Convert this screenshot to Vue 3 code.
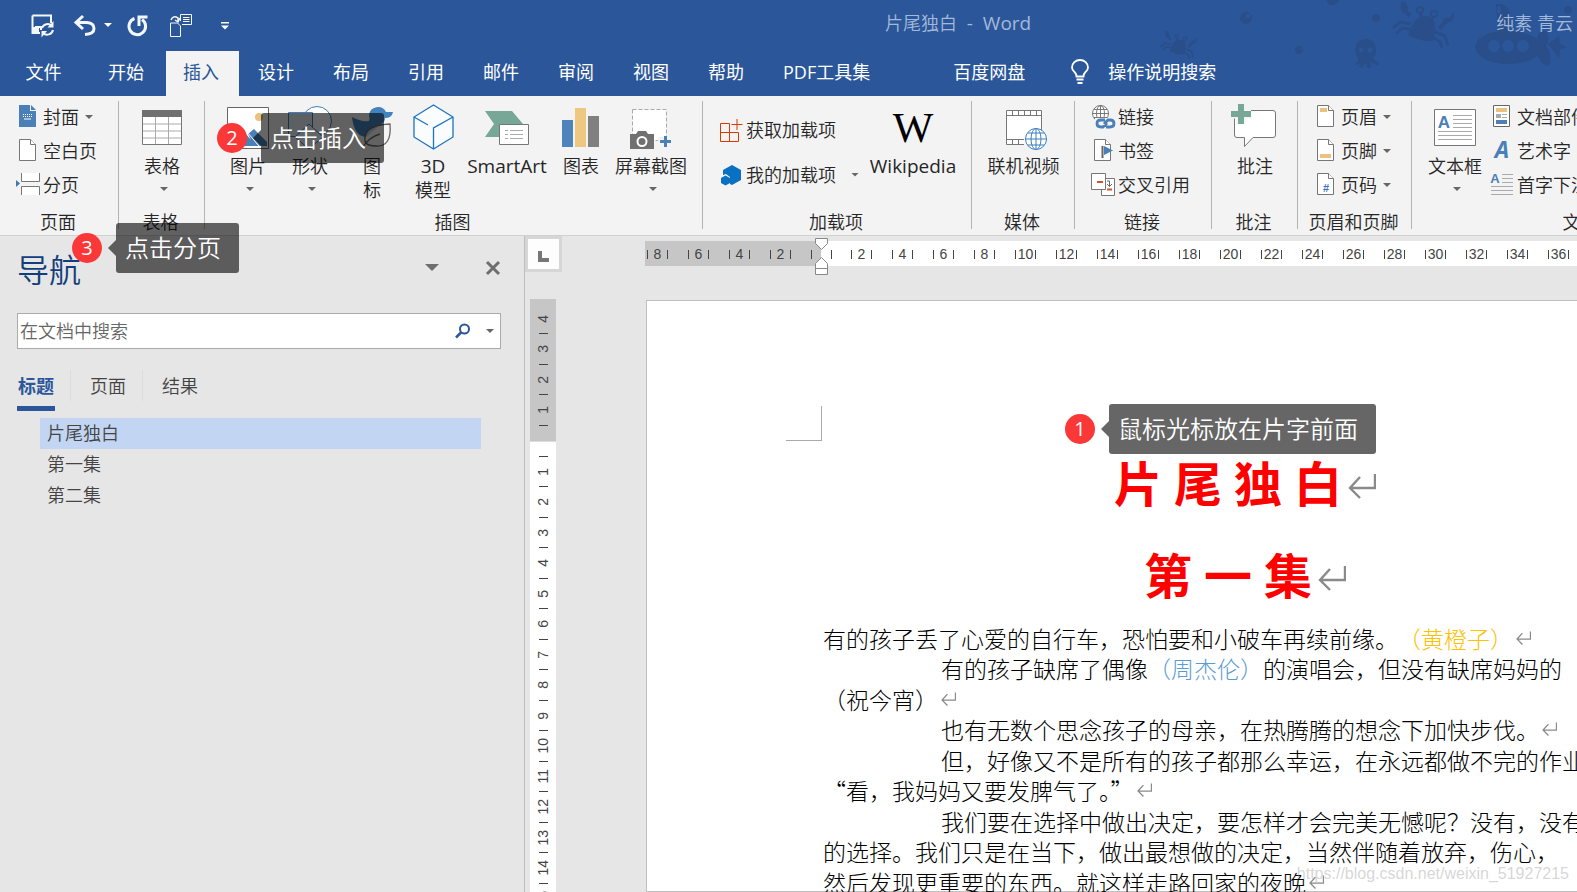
<script setup>
const tabs = ['开始', '插入', '设计', '布局', '引用', '邮件', '审阅', '视图', '帮助', 'PDF工具集', '百度网盘']
const activeTab = '插入'

const rulerLeft = [8, 6, 4, 2]
const rulerRight = Array.from({ length: 19 }, (_, i) => (i + 1) * 2)
const rulerTop = [4, 3, 2, 1]
const rulerDown = Array.from({ length: 15 }, (_, i) => i + 1)

const headings = ['片尾独白', '第一集', '第二集']

const lines = [
  { parts: [{ t: '有的孩子丢了心爱的自行车，恐怕要和小破车再续前缘。' }, { t: '（黄橙子）', c: 'gold' }], end: true },
  { deep: true, parts: [{ t: '有的孩子缺席了偶像' }, { t: '（周杰伦）', c: 'sky' }, { t: '的演唱会，但没有缺席妈妈的' }] },
  { parts: [{ t: '（祝今宵）' }], end: true },
  { deep: true, parts: [{ t: '也有无数个思念孩子的母亲，在热腾腾的想念下加快步伐。' }], end: true },
  { deep: true, parts: [{ t: '但，好像又不是所有的孩子都那么幸运，在永远都做不完的作业' }] },
  { parts: [{ t: '“看，我妈妈又要发脾气了。”' }], end: true },
  { deep: true, parts: [{ t: '我们要在选择中做出决定，要怎样才会完美无憾呢？没有，没有' }] },
  { parts: [{ t: '的选择。我们只是在当下，做出最想做的决定，当然伴随着放弃，伤心，' }] },
  { parts: [{ t: '然后发现更重要的东西。就这样走路回家的夜晚' }], end: true }
]
</script>

<template>
  <div class="app">
    <svg class="defs" width="0" height="0" aria-hidden="true">
      <symbol id="mark" viewBox="0 0 28 26">
        <path d="M27 1V15H2M12 4L2 15L12 25" fill="none" stroke="#8a8a8a" stroke-width="2.4" />
      </symbol>
      <symbol id="sheet" viewBox="0 0 24 24">
        <path d="M3.500 .5H14.500L19.500 5.500V21.500H3.500Z" fill="#fff" stroke="#777" />
        <path d="M14.500 .5V5.500H19.500" fill="#fff" stroke="#777" />
      </symbol>
      <symbol id="crab" viewBox="0 0 64 50">
        <g fill="#2a4e89">
          <path d="M16 35Q22 16 34 16Q48 18 41 41Q28 42 16 35Z" />
          <path d="M10 1Q16 2 16 11L20 14L17 17L10 12Q7 6 10 1Z" />
          <path d="M62 11Q63 22 54 24L49 30L46 27L51 22Q51 16 58 18Z" />
          <circle cx="28" cy="10" r="4" /><circle cx="42" cy="14" r="4" />
        </g>
        <g fill="none" stroke="#2a4e89" stroke-width="3">
          <path d="M19 24L8 22L1 28M18 29L10 28L4 34M43 32L53 36L56 46M41 37L48 42L50 48M28 12L30 20M41 16L38 22" />
        </g>
        <g fill="#2b579a"><circle cx="28" cy="10" r="2" /><circle cx="42" cy="14" r="2" /></g>
      </symbol>
    </svg>

    <header class="top">
      <svg class="deco" width="417" height="70" viewBox="0 0 417 70" aria-hidden="true">
        <use href="#crab" x="232" y="0" width="64" height="50" />
        <use href="#crab" x="0" y="30" width="38" height="30" />
        <g fill="#2a4e89">
          <circle cx="86" cy="18" r="6" /><circle cx="139" cy="50" r="4" /><circle cx="216" cy="18" r="4" />
          <path d="M166 0A7 8 0 0 0 179 0Z" /><circle cx="408" cy="10" r="4" />
          <path d="M195 50Q196 39 206 39Q216 39 216 50Q216 56 213 58Q217 63 219 61L218 65Q213 65 211 61V68H207L206 62L202 68L199 67L201 61Q198 67 195 64Q200 60 197 57Z" />
          <path d="M315 47Q318 31 348 31Q366 31 377 39Q378 30 386 31Q391 38 386 46Q393 55 389 66Q381 65 378 56Q366 64 348 64Q318 63 315 47Z" />
          <path d="M388 44L399 36L400 44L407 47L400 50L399 58Z" />
          <path d="M336 4Q347 3 350 13V31H338Z" />
        </g>
        <g fill="#2b579a">
          <circle cx="334" cy="46" r="6" /><circle cx="348" cy="46" r="6" /><circle cx="363" cy="46" r="6" />
          <circle cx="88" cy="16" r="2" /><circle cx="141" cy="49" r="1" /><circle cx="201" cy="50" r="2.500" /><circle cx="210" cy="50" r="2.500" />
          <ellipse cx="339" cy="10" rx="2" ry="4" />
        </g>
      </svg>

      <div class="titlebar">
        <button class="q" aria-label="保存">
          <svg width="24" height="24" viewBox="0 0 24 24" fill="none" stroke="#f4f7fb">
            <path d="M1.500 1.500H20V9M1.500 1.500V19H9" stroke-width="2" /><path d="M5 19V13H10V16" stroke-width="2" />
            <path d="M2 13H8V19H2Z" fill="#f4f7fb" stroke="none" />
            <path d="M11 14A6 6 0 0 1 21 12M22 16A6 6 0 0 1 12 19" stroke-width="2" />
            <path d="M22.500 7V13.500H16.500ZM10.500 23.500V17H16Z" fill="#f4f7fb" stroke="none" />
          </svg>
        </button>
        <button class="q undo" aria-label="撤消">
          <svg width="24" height="24" viewBox="0 0 24 24" fill="none" stroke="#f4f7fb" stroke-width="3">
            <path d="M10 2L3 8.500L10 15M3 8.500H14Q21 9 21 14.500Q21 20 12 20.500" />
          </svg>
        </button>
        <button class="q mini" aria-label="撤消列表"><svg width="8" height="5" viewBox="0 0 8 5"><path d="M0 0H8L4 4Z" fill="#fff" /></svg></button>
        <button class="q redo" aria-label="重复">
          <svg width="22" height="22" viewBox="0 0 22 22" fill="none" stroke="#f4f7fb" stroke-width="3">
            <path d="M7.500 3.500A8.300 8.300 0 1 0 15 4.500" /><path d="M12 11V2H20.500" />
          </svg>
        </button>
        <button class="q sheets" aria-label="插入页">
          <svg width="24" height="24" viewBox="0 0 24 24" fill="none" stroke="#f4f7fb">
            <path d="M1.500 9V22.500H11.500V12L8.500 9Z" /><path d="M11.500 7V.5H22.500V10.500H13" />
            <path d="M14 3.500H20.500M14 5.500H20.500M14 7.500H20.500" /><path d="M2 6Q4 1 9 4V7M6 6L9 8L11 4" stroke-width="1.500" />
          </svg>
        </button>
        <button class="q more" aria-label="自定义快速访问工具栏"><svg width="8" height="8" viewBox="0 0 8 8" fill="#fff"><path d="M0 0H8V1.500H0ZM0 3.500H8L4 7.500Z" /></svg></button>
        <h1 class="title">片尾独白<span class="latin">&nbsp; - &nbsp;Word</span></h1>
        <span class="user">纯素 青云</span>
      </div>

      <nav class="tabs">
        <button class="file">文件</button>
        <button v-for="t in tabs" :key="t" :class="{ on: t === activeTab, far: t === '百度网盘' }">{{ t }}</button>
        <button class="tell">
          <svg width="18" height="26" viewBox="0 0 18 26" fill="none" stroke="#fff" stroke-width="1.800">
            <path d="M5.500 17.500Q5.500 15 3.500 13Q1 11 1 8.500A8 7.500 0 0 1 17 8.500Q17 11 14.500 13Q12.500 15 12.500 17.500ZM5.500 20.500H12.500M6.500 24H11.500" />
          </svg>
          操作说明搜索
        </button>
      </nav>
    </header>

    <section class="ribbon" aria-label="插入">
      <div class="group g1">
        <div class="body">
          <div class="col">
            <button class="small">
              <svg width="24" height="24" viewBox="0 0 24 24"><path d="M3 0H14V6H20V22H3Z" fill="#4a7fb8" /><path d="M15 0L20 5H15Z" fill="#4a7fb8" /><path d="M7 9.500H16M7 11.500H16" stroke="#fff" stroke-dasharray="1 1" /><path d="M8 14H15" stroke="#fff" /></svg>
              封面<i class="arr"></i>
            </button>
            <button class="small"><svg width="24" height="24"><use href="#sheet" /></svg>空白页</button>
            <button class="small">
              <svg width="24" height="24" viewBox="0 0 24 24"><path d="M5.500 0V8.500H23.500V0M5.500 22V13.500H23.500V22" fill="#fff" stroke="#777" /><path d="M0 7L4 10.500L0 14Z" fill="#3f78b4" /></svg>
              分页
            </button>
          </div>
        </div>
        <h2>页面</h2>
      </div>

      <div class="group g2">
        <div class="body">
          <button class="large">
            <svg width="46" height="46" viewBox="0 0 46 46"><path d="M3.500 6.500H42.500V40.500H3.500Z" fill="#fff" stroke="#777" /><path d="M3 6H43V13H3Z" fill="#707070" /><path d="M4 20H42M4 27H42M4 34H42M16.500 13V40M29.500 13V40" stroke="#aaa" /></svg>
            <span>表格</span><i class="arr"></i>
          </button>
        </div>
        <h2>表格</h2>
      </div>

      <div class="group g3">
        <div class="body">
          <button class="large w62">
            <svg width="46" height="46" viewBox="0 0 46 46"><path d="M2.500 3.500H43.500V44.500H2.500Z" fill="#fff" stroke="#666" /><circle cx="34" cy="13" r="4" fill="#eac27d" /><path d="M4 42V37L15 23L26 36L23 30L29 25L42 38V42Z" fill="#4a7fb8" /><path d="M22 28L34 42" stroke="#fff" /></svg>
            <span>图片</span><i class="arr"></i>
          </button>
          <button class="large w62">
            <svg width="46" height="46" viewBox="0 0 46 46" stroke="#3f7fbf"><circle cx="30" cy="17" r="14.500" fill="#fff" /><path d="M1.500 8.500H25.500V32.500H1.500Z" fill="#e8eff8" /><path d="M22 20L36 33L22 45L8 33Z" fill="#f8fafc" /></svg>
            <span>形状</span><i class="arr"></i>
          </button>
          <button class="large w62 narrow">
            <svg width="46" height="46" viewBox="0 0 46 46"><path d="M20 11A9 9 0 0 1 37 8L44 8Q43 14 36 14Q36 18 32 20L17 33Q5 32 3 13Q12 18 20 17Q21 15 20 11Z" fill="#4282bd" /><path d="M41 20Q43 43 27 42Q12 42 17 30Q20 21 41 20ZM13 44Q20 33 31 30" fill="#f3f3f3" fill-opacity=".7" stroke="#666" stroke-width="1.300" /></svg>
            <span>图标</span>
          </button>
          <button class="large w60 narrow">
            <svg width="46" height="46" viewBox="0 0 46 46" fill="none" stroke="#1b74c5" stroke-width="1.300"><path d="M23.500 1L43 13V33L23.500 45L4 33V13Z" fill="#fafcfe" /><path d="M4 13L18 21M43 13L23.500 24V45" /></svg>
            <span><span class="latin">3D</span> 模型</span>
          </button>
          <button class="large w88">
            <svg width="46" height="46" viewBox="0 0 46 46"><path d="M1 7H28L39 20L28 33H1L10 20Z" fill="#76a797" /><path d="M15.500 20.500H44.500V40.500H15.500Z" fill="#fff" stroke="#777" /><path d="M21 26.500H24M21 30.500H24M21 34.500H24M26 26.500H39M26 30.500H39M26 34.500H39" stroke="#aaa" /></svg>
            <span class="latin">SmartArt</span>
          </button>
          <button class="large w60">
            <svg width="46" height="46" viewBox="0 0 46 46"><path d="M4 16H15V43H4Z" fill="#4e83bb" /><path d="M17 4H28V43H17Z" fill="#eec880" /><path d="M30 12H41V43H30Z" fill="#808080" /></svg>
            <span>图表</span>
          </button>
          <button class="large w80">
            <svg width="46" height="46" viewBox="0 0 46 46"><path d="M4.500 5.500H38.500V36.500H4.500Z" fill="#fff" stroke="#aaa" stroke-dasharray="4 2" /><path d="M30 33H46V45H30Z" fill="#f3f3f3" /><path d="M2 30H8L10 27H18L20 30H26V45H2Z" fill="#707070" /><circle cx="14" cy="37.500" r="4.500" fill="none" stroke="#fff" stroke-width="2" /><path d="M32 37.500H43M37.500 32V43" stroke="#4a7fb8" stroke-width="3" /></svg>
            <span>屏幕截图</span><i class="arr"></i>
          </button>
        </div>
        <h2>插图</h2>
      </div>

      <div class="group g4">
        <div class="body">
          <div class="col two">
            <button class="small">
              <svg width="24" height="24" viewBox="0 0 24 24" fill="none" stroke="#d83b01"><path d="M10.500 5.500H1.500V23.500H19.500V14.500H1.500M10.500 5.500V23.500M18 1V12M12.500 6.500H23.500" /></svg>
              获取加载项
            </button>
            <button class="small">
              <svg width="24" height="24" viewBox="0 0 24 24" fill="#0a70c4"><path d="M13 2L22 7V17L13 22L11 21V14L7 11L4 12V7Z" /><path d="M6.500 12.500L11 15V20L6.500 22.500L2 20V15Z" /></svg>
              我的加载项<i class="arr wide"></i>
            </button>
          </div>
          <button class="large w96">
            <svg width="46" height="46" viewBox="0 0 46 46"><text x="23" y="38" text-anchor="middle" font-family="Liberation Serif" font-size="43">W</text></svg>
            <span class="latin">Wikipedia</span>
          </button>
        </div>
        <h2>加载项</h2>
      </div>

      <div class="group g5">
        <div class="body">
          <button class="large">
            <svg width="46" height="46" viewBox="0 0 46 46"><path d="M5.500 6.500H40.500V40.500H5.500Z" fill="#fff" stroke="#777" /><path d="M5.500 11.500H40.500M5.500 35.500H24M11.500 6V11M17.500 6V11M23.500 6V11M29.500 6V11M35.500 6V11M11.500 36V40M17.500 36V40" stroke="#777" /><path d="M23 27H46V46H23Z" fill="#f3f3f3" /><path d="M23 27H40V30L24 41Z" fill="#fff" /><g fill="#fff" stroke="#3f7fbf"><circle cx="35" cy="35" r="10.500" /><ellipse cx="35" cy="35" rx="5" ry="10.500" /><path d="M35 24V46M24 35H46M27 29H43M27 41H43" /></g></svg>
            <span>联机视频</span>
          </button>
        </div>
        <h2>媒体</h2>
      </div>

      <div class="group g6">
        <div class="body">
          <div class="col">
            <button class="small">
              <svg width="24" height="24" viewBox="0 0 24 24" fill="none"><g stroke="#777"><circle cx="9.500" cy="8.500" r="8" fill="#fff" /><ellipse cx="9.500" cy="8.500" rx="4" ry="8" /><path d="M1 8.500H18M3 4.500H16M3 12.500H16M9.500 0V17" /></g><path d="M4 13H24V24H4Z" fill="#f3f3f3" /><path d="M14 15H10Q6 15 6 18.500Q6 22 10 22H12L16 18M15 22H19Q23 22 23 18.500Q23 15 19 15H17L13 19" stroke="#4a7fb8" stroke-width="2.800" /></svg>
              链接
            </button>
            <button class="small">
              <svg width="24" height="24"><use href="#sheet" /><path d="M11.500 7V19" stroke="#666" stroke-width="2" /><path d="M13 7L22 11.500L13 16Z" fill="#4a7fb8" /></svg>
              书签
            </button>
            <button class="small">
              <svg width="24" height="24" viewBox="0 0 24 24"><path d="M10.500 5.500H23.500V22.500H10.500Z" fill="#fff" stroke="#777" /><path d="M.5 .5H14.500V16.500H.5Z" fill="#fff" stroke="#777" /><path d="M6 9H12M16 16.500H21" stroke="#d9502e" stroke-width="2" /><path d="M16 8H18.500V13M16 11L18.500 13.500L21 11" fill="none" stroke="#666" /></svg>
              交叉引用
            </button>
          </div>
        </div>
        <h2>链接</h2>
      </div>

      <div class="group g7">
        <div class="body">
          <button class="large">
            <svg width="46" height="46" viewBox="0 0 46 46"><path d="M6 6.500H41Q43.500 6.500 43.500 9V31Q43.500 33.500 41 33.500H21L12.500 42.500V33.500H5Q2.500 33.500 2.500 31V10Z" fill="#fff" stroke="#777" /><path d="M-1 10H19M9 0V20" stroke="#f3f3f3" stroke-width="9" /><path d="M-1 10H19M9 0V20" stroke="#76a797" stroke-width="6" /></svg>
            <span>批注</span>
          </button>
        </div>
        <h2>批注</h2>
      </div>

      <div class="group g8">
        <div class="body">
          <div class="col">
            <button class="small"><svg width="24" height="24"><use href="#sheet" /><path d="M6 3H13V7H6Z" fill="#eac27d" /></svg>页眉<i class="arr"></i></button>
            <button class="small"><svg width="24" height="24"><use href="#sheet" /><path d="M6 15H17V19H6Z" fill="#eac27d" /></svg>页脚<i class="arr"></i></button>
            <button class="small"><svg width="24" height="24"><use href="#sheet" /><text x="12" y="19" text-anchor="middle" font-family="Liberation Sans" font-weight="bold" font-size="11" fill="#3f78b4">#</text></svg>页码<i class="arr"></i></button>
          </div>
        </div>
        <h2>页眉和页脚</h2>
      </div>

      <div class="group g9">
        <div class="body">
          <button class="large w70">
            <svg width="46" height="46" viewBox="0 0 46 46"><path d="M2.500 5.500H43.500V41.500H2.500Z" fill="#fff" stroke="#777" /><text x="12" y="24" text-anchor="middle" font-family="Liberation Sans" font-weight="bold" font-size="17" fill="#4a7fb8">A</text><path d="M21 11.500H40M21 15.500H40M21 19.500H40M21 23.500H40M6 27.500H40M6 31.500H40M6 35.500H40" stroke="#aaa" /></svg>
            <span>文本框</span><i class="arr"></i>
          </button>
          <div class="col flush">
            <button class="small"><svg width="24" height="24" viewBox="0 0 24 24"><path d="M3.500 .5H19.500V21.500H3.500Z" fill="#fff" stroke="#666" /><path d="M6 3H17V7H6Z" fill="#eac27d" /><path d="M6 9H11V13H6Z" fill="#aaa" /><path d="M12 9.500H17M12 12.500H17" stroke="#aaa" /><path d="M6 15H17V19H6Z" fill="#4a7fb8" /></svg>文档部件</button>
            <button class="small"><svg width="24" height="24" viewBox="0 0 24 24"><text x="12" y="19" text-anchor="middle" font-family="Open Sans" font-style="italic" font-weight="bold" font-size="23" fill="#4a7fb8">A</text></svg>艺术字</button>
            <button class="small"><svg width="24" height="24" viewBox="0 0 24 24"><text x="5" y="10" text-anchor="middle" font-family="Liberation Sans" font-weight="bold" font-size="13" fill="#4a7fb8">A</text><path d="M12 1.500H23M12 5.500H23M12 9.500H23M1 13.500H23M1 17.500H23M1 21.500H23" stroke="#aaa" /></svg>首字下沉</button>
          </div>
        </div>
        <h2>文本</h2>
      </div>
    </section>

    <main class="work">
      <aside class="pane">
        <div class="pane-head">
          <h2>导航</h2>
          <button class="opt" aria-label="任务窗格选项"><svg width="14" height="8" viewBox="0 0 14 8"><path d="M0 0H14L7 7Z" fill="#6e6e6e" /></svg></button>
          <button aria-label="关闭"><svg width="14" height="14" viewBox="0 0 14 14"><path d="M1 1L13 13M13 1L1 13" stroke="#6e6e6e" stroke-width="3" /></svg></button>
        </div>
        <div class="search">
          <input type="text" placeholder="在文档中搜索" aria-label="在文档中搜索" />
          <svg width="16" height="16" viewBox="0 0 16 16" fill="none" stroke="#2b579a" stroke-width="2"><circle cx="9.500" cy="6" r="4.500" /><path d="M6 9.500L1 14.500" stroke-width="2.500" /></svg>
          <i class="arr"></i>
        </div>
        <div class="pane-tabs">
          <button class="on">标题</button><button>页面</button><button>结果</button>
        </div>
        <ul class="outline">
          <li v-for="(h, i) in headings" :key="h"><a href="#" :class="{ on: i === 0 }">{{ h }}</a></li>
        </ul>
      </aside>

      <section class="editor">
        <button class="corner" aria-label="左对齐制表符"><svg width="11" height="11" viewBox="0 0 11 11"><path d="M0 0H4V7H11V11H0Z" fill="#777" /></svg></button>
        <div class="hruler">
          <div class="neg"><span v-for="n in rulerLeft" :key="n" class="cell"><b>{{ n }}</b></span><span class="half"></span></div>
          <div class="pos"><span class="half"></span><span v-for="n in rulerRight" :key="n" class="cell"><b>{{ n }}</b></span></div>
          <svg class="indent" width="13" height="37" viewBox="0 0 13 37" fill="#fff" stroke="#888"><path d="M.5 .5H12.500V5.500L6.500 11.500L.5 5.500ZM6.500 19.500L12.500 25.500V36.500H.5V25.500ZM.5 30.500H12.500" /></svg>
        </div>
        <div class="vruler">
          <div class="neg"><span v-for="n in rulerTop" :key="n"><b>{{ n }}</b></span></div>
          <div class="pos"><span></span><span v-for="n in rulerDown" :key="n"><b>{{ n }}</b></span></div>
        </div>
        <article class="page">
          <i class="crop"></i>
          <h2>片 尾 独 白<svg class="big" width="28" height="26"><use href="#mark" /></svg></h2>
          <h2>第 一 集<svg class="big" width="28" height="26"><use href="#mark" /></svg></h2>
          <div class="text">
            <p v-for="(l, i) in lines" :key="i" :class="{ deep: l.deep }">
              <span v-for="(p, j) in l.parts" :key="j" :class="p.c">{{ p.t }}</span><svg v-if="l.end" width="15" height="14"><use href="#mark" /></svg>
            </p>
          </div>
          <div class="callout c1"><b>1</b><span>鼠标光标放在片字前面</span></div>
        </article>
      </section>
    </main>

    <div class="callout c2"><b>2</b><span>点击插入</span></div>
    <div class="callout c3"><b>3</b><span>点击分页</span></div>
    <div class="watermark">https://blog.csdn.net/weixin_51927215</div>
  </div>
</template>

<style>
body { margin: 0; }
</style>

<style scoped>
* { box-sizing: border-box; }
.app {
  position: relative;
  display: flex;
  flex-direction: column;
  height: 100vh;
  overflow: hidden;
  font-family: "Open Sans", "Noto Sans CJK SC", sans-serif;
  font-size: 18px;
  line-height: 24px;
  font-weight: 350;
  color: #262626;
  background: #e6e6e6;
}
.defs { position: absolute; }
svg { display: block; flex: none; overflow: visible; }
button {
  border: 0;
  padding: 0;
  background: none;
  font: inherit;
  color: inherit;
  white-space: nowrap;
}
h1, h2, p, ul { margin: 0; padding: 0; font-size: inherit; font-weight: inherit; }
.latin { font-size: 19px; font-weight: 400; }
.arr {
  width: 8px;
  height: 4px;
  background: #666;
  clip-path: polygon(0 0, 100% 0, 50% 100%);
}

/* title bar and tabs */
.top { position: relative; flex: none; background: #2b579a; color: #fff; }
.deco { position: absolute; right: 0; top: 0; }
.titlebar { position: relative; display: flex; align-items: center; height: 51px; padding-left: 31px; }
.undo { margin-left: 18px; }
.mini { margin-left: 7px; }
.redo { margin-left: 15px; }
.sheets { margin-left: 20px; }
.more { margin-left: 28px; }
.title { margin-left: 656px; padding-bottom: 5px; color: #a3b9d9; white-space: nowrap; }
.user { margin-left: auto; padding: 0 4px 5px 0; color: #a3b9d9; white-space: nowrap; }
.tabs { position: relative; display: flex; gap: 2px; height: 45px; }
.tabs button { flex: none; padding: 0 20px 3px 17px; font-weight: 400; }
.tabs .file { width: 89px; padding: 0 2px 3px 0; }
.tabs .on { background: #f3f3f3; color: #2b579a; }
.tabs .far { margin-left: 44px; }
.tabs .tell { display: flex; align-items: center; gap: 19px; padding-left: 24px; }

/* ribbon */
.ribbon { display: flex; flex: none; height: 140px; padding-top: 4px; background: #f3f3f3; border-bottom: 1px solid #d0d0d0; overflow: hidden; }
.group { position: relative; flex: none; display: flex; flex-direction: column; }
.group::after { content: ""; position: absolute; right: 0; top: 1px; width: 1px; height: 128px; background: #b4b4b4; }
.group h2 { text-align: center; padding: 3px 3px 0 0; line-height: 26px; }
.body { display: flex; height: 106px; }
.g1 { width: 119px; }
.g2, .g7 { width: 86px; }
.g3 { width: 498px; }
.g3 .body { padding-left: 12px; }
.g4 { width: 269px; }
.g5 { width: 103px; }
.g6 { width: 137px; }
.g8 { width: 114px; }
.g9 { width: 340px; }
.g9 .body { padding-left: 8px; }
.g2 .large, .g5 .large, .g7 .large { width: 100%; }
.col { display: flex; flex-direction: column; padding-left: 16px; }
.col.flush { padding-left: 0; }
.col.two { padding-top: 7px; }
.small { display: flex; align-items: center; height: 34px; }
.two .small { height: 45px; }
.small svg { margin-right: 3px; }
.small .arr { margin-left: 6px; }
.small .arr.wide { margin-left: 15px; }
.large { display: flex; flex-direction: column; align-items: center; padding-top: 4px; white-space: normal; }
.large svg { margin-bottom: 4px; }
.large .arr { margin: 9px 0 0 4px; }
.narrow > span { width: 36px; }
.narrow.w62 > span { width: 18px; }
.w60 { width: 60px; }
.w62 { width: 62px; }
.w70 { width: 70px; }
.w80 { width: 80px; }
.w88 { width: 88px; }
.w96 { width: 96px; margin-left: 6px; }

/* navigation pane */
.work { display: flex; flex: 1; min-height: 0; }
.pane { flex: none; width: 525px; padding: 10px 23px 0 17px; border-right: 1px solid #bdbdbd; color: #444; }
.pane-head { display: flex; align-items: center; height: 48px; margin-bottom: 19px; padding-right: 1px; }
.pane-head h2 { flex: 1; font-size: 32px; line-height: 48px; color: #123f7c; }
.pane-head button { padding-bottom: 5px; }
.pane-head .opt { margin-right: 47px; }
.search { display: flex; align-items: center; height: 36px; padding: 0 6px 0 2px; background: #fff; border: 1px solid #ababab; }
.search input { flex: 1; min-width: 0; border: 0; outline: 0; padding: 0; font: inherit; background: none; }
.search input::placeholder { color: #666; opacity: 1; }
.search svg { margin-right: 3px; }
.search .arr { margin-left: 12px; }
.pane-tabs { display: flex; padding-top: 21px; }
.pane-tabs button { position: relative; height: 41px; width: 72px; padding: 0 0 10px 4px; }
.pane-tabs button + button::before { content: ""; position: absolute; left: 0; top: 0; width: 1px; height: 31px; background: #dcdcdc; }
.pane-tabs .on { width: 38px; margin-right: 15px; font-weight: 700; color: #2b579a; border-bottom: 5px solid #2b579a; padding: 0 0 5px; }
.outline { list-style: none; padding: 7px 20px 0 23px; }
.outline a { display: block; padding-left: 7px; line-height: 31px; color: #444; text-decoration: none; }
.outline .on { background: #c2d5f2; }

/* editor */
.editor { flex: 1; min-width: 0; display: grid; grid-template: 63px minmax(0, 1fr) / 37px minmax(0, 1fr); overflow: hidden; }
.corner { display: flex; width: 37px; height: 36px; padding: 12px 10px; border: 3px solid #d6d6d6; background: #fdfdfd; }
.hruler { position: relative; display: flex; height: 25px; margin: 5px 0 0 83px; font: 14px/27px "Liberation Sans", sans-serif; color: #444; }
.hruler b, .vruler b { font-weight: 400; }
.hruler .neg { display: flex; justify-content: flex-end; width: 176px; background: #c6c6c6; overflow: hidden; }
.hruler .pos { display: flex; flex: 1; min-width: 0; background: #fff; overflow: hidden; }
.cell { flex: none; display: flex; align-items: center; justify-content: center; width: 41px; padding-top: 2px; }
.cell b { display: flex; align-items: center; justify-content: center; width: 21px; height: 9px; border: solid #444; border-width: 0 1px; }
.half { flex: none; align-self: center; width: 10px; height: 9px; margin: 2px 10px 0 0; box-shadow: 1px 0 #444; }
.indent { position: absolute; left: 170px; top: -3px; }
.vruler { display: flex; flex-direction: column; width: 26px; margin-left: 5px; overflow: hidden; font: 14px/16px "Liberation Sans", sans-serif; color: #444; }
.vruler > div { display: grid; grid-auto-rows: 30px 31px; justify-items: center; }
.vruler .neg { flex: none; height: 143px; padding-top: 5px; background: #c6c6c6; border-bottom: 1px solid #dcdcdc; }
.vruler .pos { flex: 1; grid-template-rows: 15px; background: #fff; }
.vruler span { display: flex; align-items: center; justify-content: center; width: 9px; border-bottom: 1px solid #444; }
.vruler b { writing-mode: vertical-rl; transform: rotate(180deg); }

/* page */
.page { position: relative; width: 1162px; margin: 1px 0 0 84px; padding: 139px 174px 0 176px; background: #fff; border: 1px solid #c0c0c0; }
.crop { position: absolute; left: 139px; top: 105px; width: 36px; height: 35px; border: solid #aaa; border-width: 0 1px 1px 0; }
.page h2 { display: flex; align-items: center; justify-content: center; font: 700 48px/92px "Liberation Serif", "Noto Sans CJK SC", serif; color: #f00; }
.page .big { margin: 0 -34px 0 6px; }
.text { display: grid; grid-auto-rows: 31px 30px; margin-top: -2px; font: 23px/30px "Noto Sans CJK SC", sans-serif; font-weight: 300; color: #000; }
.text p { display: flex; align-items: center; white-space: nowrap; }
.text p.deep { padding-left: 118px; }
.text svg { margin-left: 3px; }
.gold { color: #ffc000; }
.sky { color: #5b9bd5; }

/* annotations */
.callout { position: absolute; display: flex; align-items: center; gap: 14px; height: 50px; color: #fff; white-space: nowrap; }
.callout b { width: 30px; height: 30px; border-radius: 50%; background: #fb3838; text-align: center; font-size: 20px; line-height: 30px; font-weight: 400; }
.callout span { position: relative; height: 50px; padding: 0 18px 0 9px; border-radius: 3px; background: rgba(0, 0, 0, .6); font-size: 24px; line-height: 49px; }
.callout span::before { content: ""; position: absolute; left: -8px; top: 17px; border: solid transparent; border-width: 8px 8px 8px 0; border-right-color: rgba(0, 0, 0, .6); }
.c1 { left: 418px; top: 103px; }
.c2 { left: 217px; top: 113px; }
.c3 { left: 72px; top: 223px; }
.watermark { position: absolute; right: 8px; bottom: 6px; font: 16px/24px "Liberation Sans", sans-serif; color: rgba(150, 150, 150, .4); }
</style>
